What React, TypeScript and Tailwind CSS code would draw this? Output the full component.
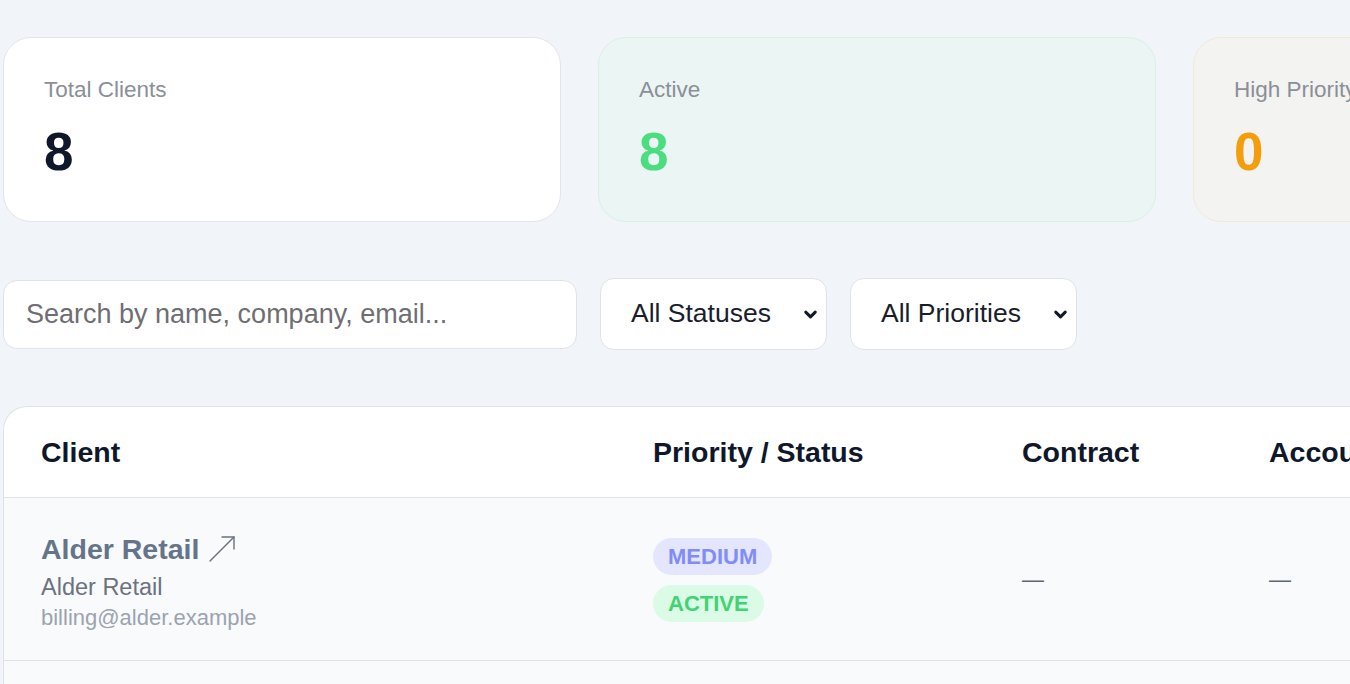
import React from 'react';

const font = { fontFamily: '"Liberation Sans", Arial, sans-serif' };

interface StatProps {
    label: string;
    value: string;
    className: string;
    valueClass: string;
}

const StatCard: React.FC<StatProps> = ({ label, value, className, valueClass }) => (
    <div className={`w-[558px] h-[185px] shrink-0 rounded-[28px] border px-10 pt-[40px] ${className}`}>
        <div className="text-[22.5px] leading-[24px] text-[#8a8f98]">{label}</div>
        <div className={`mt-[22px] text-[53px] leading-[56px] font-bold ${valueClass}`}>{value}</div>
    </div>
);

const Chevron = () => (
    <svg viewBox="0 0 24 24" className="w-[19px] h-[19px]" fill="none" stroke="#111827" strokeWidth={3.8} strokeLinecap="round" strokeLinejoin="round">
        <path d="M6 9l6 6 6-6" />
    </svg>
);

const FilterSelect: React.FC<{ label: string }> = ({ label }) => (
    <div className="w-[227px] h-[72px] shrink-0 rounded-[14px] border border-[#dfe3e8] bg-white flex items-center justify-between pl-[30px] pr-[6px]">
        <span className="text-[26.5px] text-[#1a1d2b]">{label}</span>
        <Chevron />
    </div>
);

const Badge: React.FC<{ text: string; className: string }> = ({ text, className }) => (
    <span className={`inline-flex items-center h-[37px] rounded-full px-[15px] text-[22px] font-bold ${className}`}>{text}</span>
);

const ArrowUpRight = () => (
    <svg viewBox="0 0 28 28" className="w-[28px] h-[28px] ml-[9px]" fill="none" stroke="#6b7280" strokeWidth={1.4} strokeLinecap="round" strokeLinejoin="round">
        <path d="M2 26L26 2" />
        <path d="M14 2h12v12" />
    </svg>
);

export default function App() {
    return (
        <div className="w-[1350px] h-[684px] overflow-hidden bg-[#f1f4f8] pl-[3px] pt-[37px]" style={font}>
            {/* Stats */}
            <div className="flex gap-[37px]">
                <StatCard label="Total Clients" value="8" className="bg-white border-[#e2e5ea]" valueClass="text-[#0f172a]" />
                <StatCard label="Active" value="8" className="bg-[#ebf5f3] border-[#d8f1e5]" valueClass="text-[#4ade80]" />
                <StatCard label="High Priority" value="0" className="bg-[#f3f3f1] border-[#f3e9d6]" valueClass="text-[#f59e0b]" />
            </div>

            {/* Filters */}
            <div className="flex items-center gap-[23px] mt-[56px]">
                <div className="w-[574px] h-[69px] shrink-0 rounded-[14px] border border-[#dfe3e8] bg-white flex items-center pl-[22px]">
                    <span className="text-[27px] text-[#6e6e73]">Search by name, company, email...</span>
                </div>
                <FilterSelect label="All Statuses" />
                <FilterSelect label="All Priorities" />
            </div>

            {/* Table */}
            <div className="mt-[56px] w-[1420px] rounded-tl-[24px] border-l border-t border-[#dfe3e8] bg-white overflow-hidden">
                <div className="grid grid-cols-[612px_369px_247px_1fr] h-[91px] items-center border-b border-[#dfe3e8] pl-[37px] text-[28.5px] font-bold text-[#0f172a]">
                    <div>Client</div>
                    <div>Priority / Status</div>
                    <div>Contract</div>
                    <div>Account</div>
                </div>
                <div className="grid grid-cols-[612px_369px_247px_1fr] h-[163px] items-center border-b border-[#dfe3e8] bg-[#f8fafc] pl-[37px]">
                    <div className="flex flex-col pt-[6px]">
                        <div className="flex items-center h-[34px]">
                            <span className="text-[28.5px] font-bold text-[#64748b]">Alder Retail</span>
                            <ArrowUpRight />
                        </div>
                        <div className="text-[23.5px] leading-[30px] text-[#6b7280] mt-[6px]">Alder Retail</div>
                        <div className="text-[22px] leading-[28px] text-[#9ca3af] mt-[2px]">billing@alder.example</div>
                    </div>
                    <div className="flex flex-col items-start gap-[10px] mt-[2px]">
                        <Badge text="MEDIUM" className="bg-[#e3e6fd] text-[#818cf8]" />
                        <Badge text="ACTIVE" className="bg-[#dcfbe6] text-[#3fd474]" />
                    </div>
                    <div className="text-[22px] text-[#5f6670]">—</div>
                    <div className="text-[22px] text-[#5f6670]">—</div>
                </div>
                <div className="h-[60px] bg-[#f8fafc]" />
            </div>
        </div>
    );
}
